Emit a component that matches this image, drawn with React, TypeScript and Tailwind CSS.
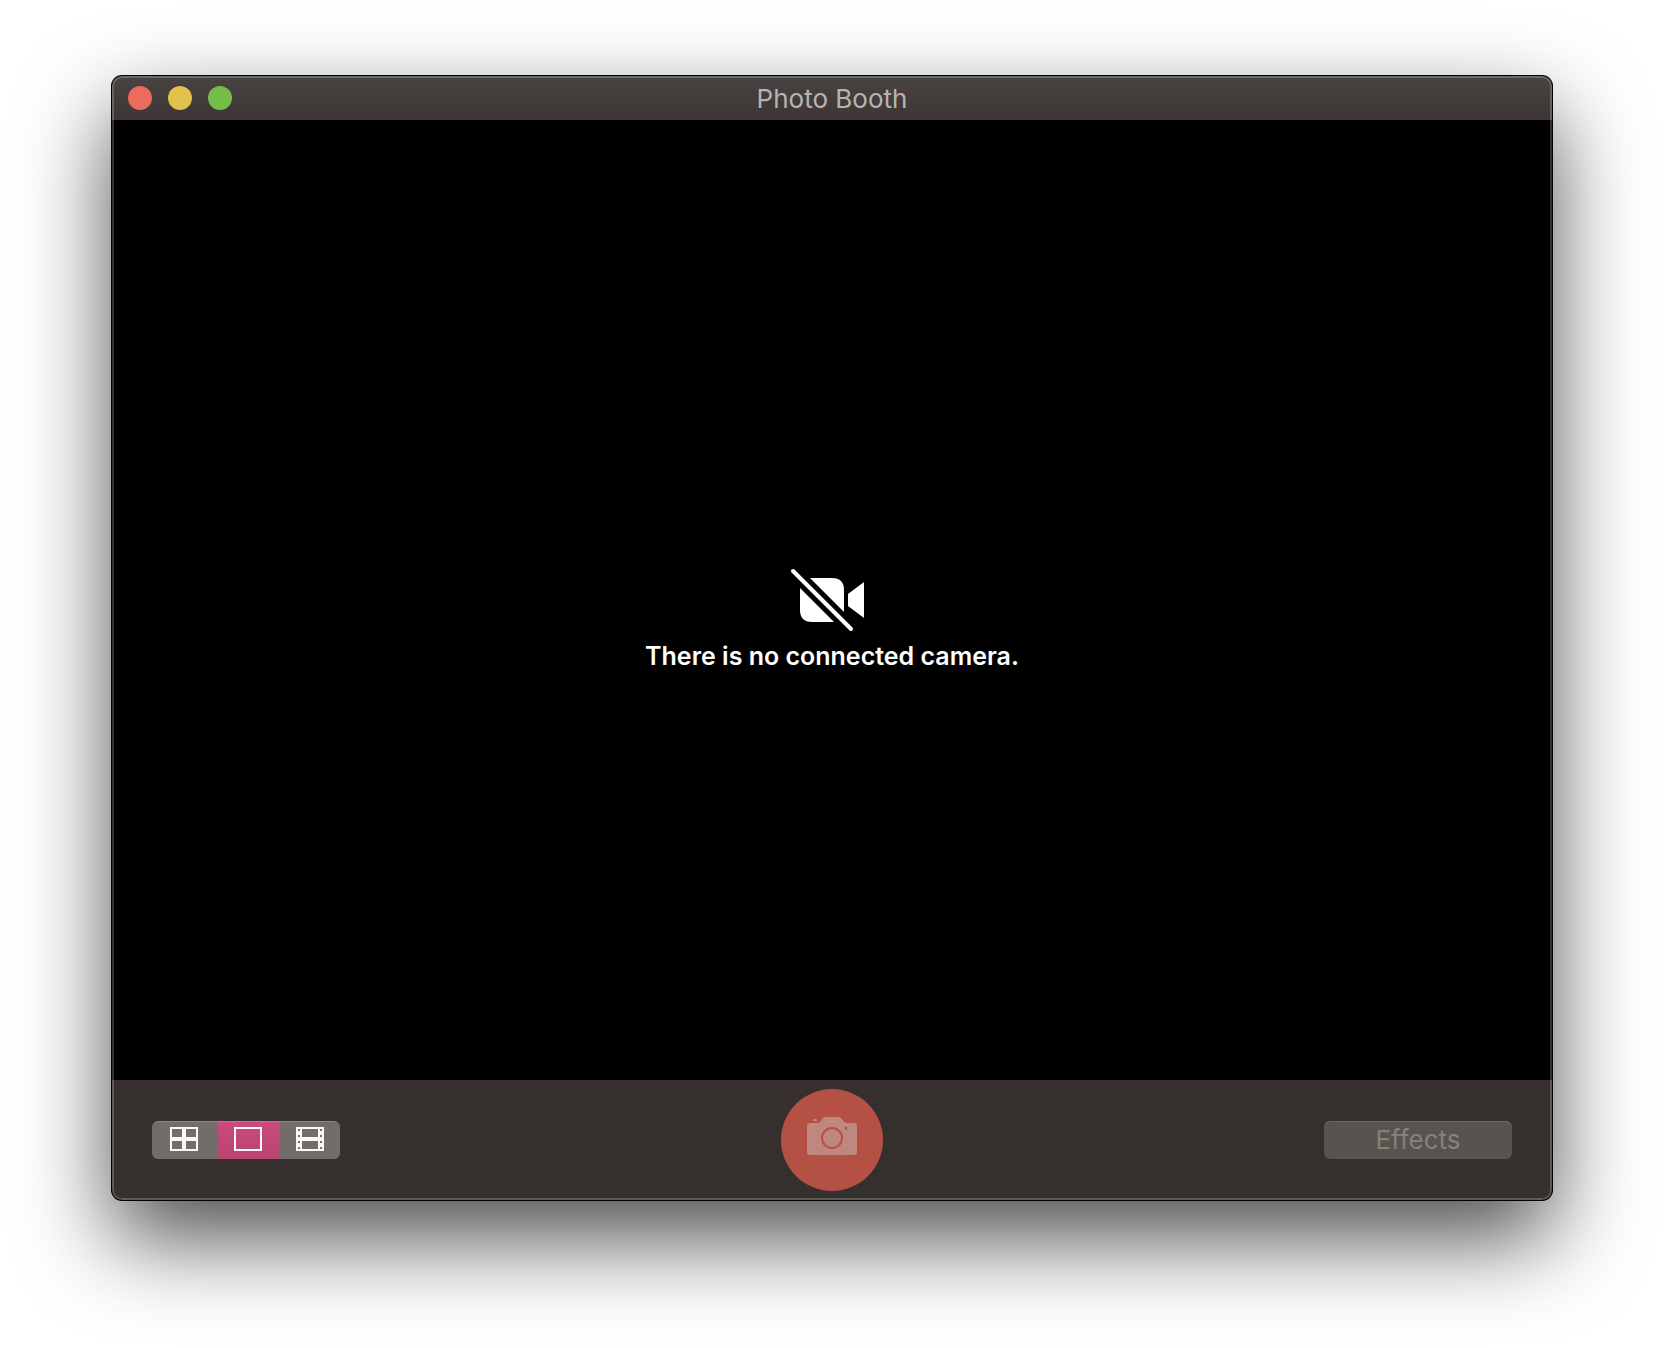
import React from "react";

function NoCameraIcon() {
  return (
    <svg width="84" height="70" viewBox="0 0 84 70" aria-hidden="true">
      <path
        fill="#fff"
        d="M20 12H42Q54 12 54 24V46ZM10 22L44 56H22Q10 56 10 44Z"
      />
      <path fill="#fff" d="M58 28L74 16V52L58 40Z" />
      <path d="M3 5L61 63" stroke="#fff" strokeWidth="4" strokeLinecap="round" />
    </svg>
  );
}

function GridIcon() {
  return (
    <svg width="28" height="24" viewBox="0 0 28 24" aria-hidden="true">
      <path
        fill="#fcf8f5"
        fillRule="evenodd"
        d="M0 0H28V24H0ZM2 2V10H12V2ZM16 2V10H26V2ZM2 14V22H12V14ZM16 14V22H26V14Z"
      />
    </svg>
  );
}

function FrameIcon() {
  return (
    <svg width="28" height="24" viewBox="0 0 28 24" aria-hidden="true">
      <path fill="#fcf8f5" fillRule="evenodd" d="M0 0H28V24H0ZM2 2V22H26V2Z" />
    </svg>
  );
}

function FilmIcon() {
  return (
    <svg width="28" height="24" viewBox="0 0 28 24" aria-hidden="true">
      <path
        fill="#fcf8f5"
        fillRule="evenodd"
        d="M0 0H28V24H0ZM6 2V10H22V2ZM6 14V22H22V14ZM2 2V4H4V2ZM2 8V10H4V8ZM2 14V16H4V14ZM2 20V22H4V20ZM24 2V4H26V2ZM24 8V10H26V8ZM24 14V16H26V14ZM24 20V22H26V20Z"
      />
    </svg>
  );
}

function CameraIcon() {
  return (
    <svg width="50" height="38" viewBox="0 0 50 38" aria-hidden="true">
      <path
        fill="#c08780"
        fillRule="evenodd"
        d="M3 6H11Q13 6 14 4L15.500 1.500Q16.500 0 18.500 0H31.500Q33.500 0 34.500 1.500L37 4.500Q38 6 40 6H47Q50 6 50 9V35Q50 38 47 38H3Q0 38 0 35V9Q0 6 3 6ZM25 10A11 11 0 1 0 25 32A11 11 0 1 0 25 10ZM39 9.500A1.500 1.500 0 1 0 39 12.500A1.500 1.500 0 1 0 39 9.500Z"
      />
      <circle cx="25" cy="21" r="9" fill="#c08780" />
      <path d="M6 4V3Q6 2 7 2H9Q10 2 10 3V4Z" fill="#c08780" />
    </svg>
  );
}

const lights = [
  { label: "Close", color: "bg-[#ed6a5f]" },
  { label: "Minimize", color: "bg-[#e1c04c]" },
  { label: "Zoom", color: "bg-[#72be47]" },
];

const modes = [
  { label: "Four quick pictures", Icon: GridIcon, style: "w-[66px] bg-[#726d69] pr-0.5" },
  { label: "Still picture", Icon: FrameIcon, style: "w-[62px] bg-linear-to-b from-[#cb4a80] to-[#b8446f] pr-0.5" },
  { label: "Movie clip", Icon: FilmIcon, style: "w-[60px] bg-[#726d69]" },
];

export default function App() {
  return (
    <div className="min-h-screen bg-white px-28 pt-[76px] pb-[148px] font-[Inter,sans-serif]">
      <main className="relative flex min-h-[1124px] flex-col overflow-hidden rounded-[10px] bg-[#352f2d] shadow-[0_0_0_1px_#000,0_38px_90px_rgba(0,0,0,0.7)]">
        <header className="grid h-11 grid-cols-[1fr_auto_1fr] items-center bg-linear-to-b from-[#494342] to-[#3b3635] px-4">
          <div className="flex gap-4">
            {lights.map((l) => (
              <button key={l.label} aria-label={l.label} className={`size-6 rounded-full ${l.color}`} />
            ))}
          </div>
          <h1 className="pt-0.5 text-[26px] leading-8 text-[#b8b3b1]">Photo Booth</h1>
        </header>
        <section className="flex flex-1 flex-col items-center justify-center gap-1 bg-black pt-[38px]">
          <NoCameraIcon />
          <p className="text-[25px] leading-8 font-semibold text-white">There is no connected camera.</p>
        </section>
        <footer className="grid h-30 grid-cols-[1fr_auto_1fr] items-center px-10">
          <div className="flex h-[38px] w-fit overflow-hidden rounded-md" role="group" aria-label="Capture mode">
            {modes.map(({ label, Icon, style }) => (
              <button
                key={label}
                aria-label={label}
                className={`flex items-center justify-center pb-0.5 shadow-[inset_0_1px_0_rgba(255,255,255,0.18)] ${style}`}
              >
                <Icon />
              </button>
            ))}
          </div>
          <button
            aria-label="Take photo"
            className="flex size-[102px] items-center justify-center rounded-full bg-[#b55044] pb-2"
          >
            <CameraIcon />
          </button>
          <button className="h-[38px] w-[188px] justify-self-end rounded-md bg-[#59534f] text-[26px] leading-8 text-[#858079] shadow-[inset_0_1px_0_#6a6561]">
            Effects
          </button>
        </footer>
        <div className="pointer-events-none absolute inset-0 rounded-[10px] border-2 border-white/20" />
      </main>
    </div>
  );
}
